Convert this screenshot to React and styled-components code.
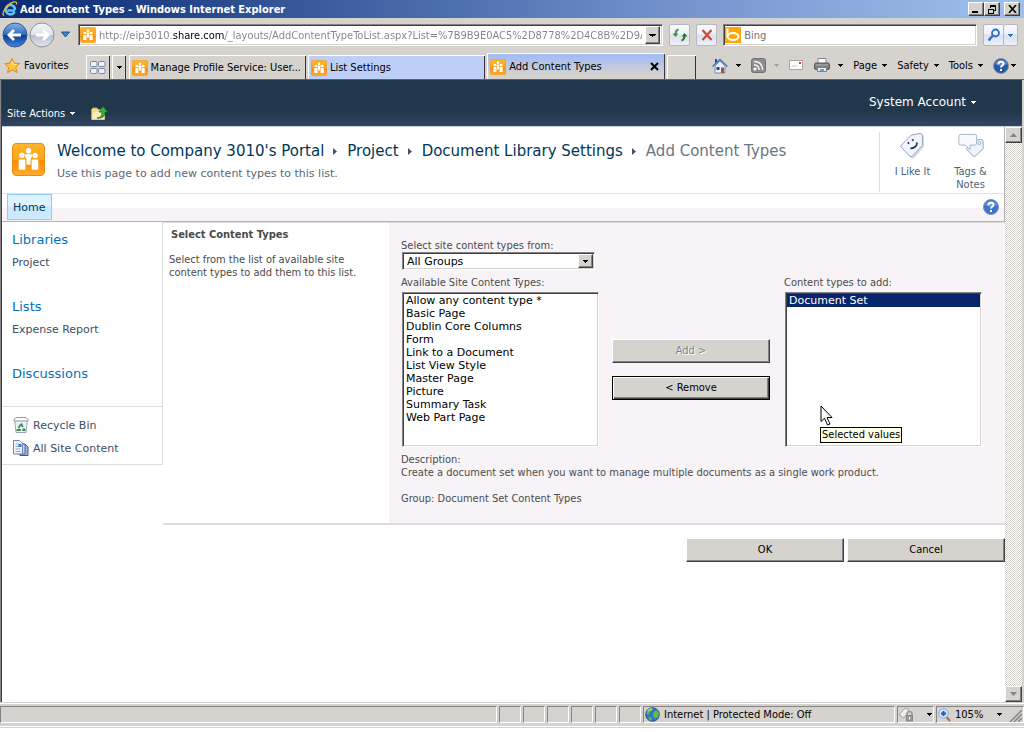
import React from "react";
import styled, { createGlobalStyle, css } from "styled-components";

const ui = `"DejaVu Sans Condensed", "DejaVu Sans", sans-serif`;
const wide = `"DejaVu Sans", sans-serif`;
const face = "#d6d3ce";

const GlobalStyle = createGlobalStyle`
  *, *::before, *::after { box-sizing: border-box; }
  body { margin: 0; background: #fff; font: 11px/13px ${ui}; color: #000; }
  button, input, select { font: inherit; color: inherit; margin: 0; border-radius: 0; }
  a { color: inherit; text-decoration: none; }
  svg { display: block; flex: none; }
  h1, h2, p, ul { margin: 0; padding: 0; font: inherit; list-style: none; }
`;

const raised = css`
  border: 1px solid;
  border-color: #fff #404040 #404040 #fff;
  box-shadow: inset -1px -1px 0 #848284;
`;
const sunken = css`
  border: 1px solid;
  border-color: #848284 #fff #fff #848284;
  box-shadow: inset 1px 1px 0 #404040, inset -1px -1px 0 ${face};
`;

/* ---------- browser window ---------- */

const Window = styled.div`
  display: flex;
  flex-direction: column;
  min-height: 100vh;
  padding: 0 8px 4px 0;
`;

const TitleBar = styled.header`
  display: flex;
  align-items: center;
  gap: 2px;
  height: 18px;
  padding: 0 4px 0 2px;
  background: linear-gradient(90deg, #0a2a72, #4f70b0 45%, #7796d0 68%, #a0c0ec);
`;

const WindowTitle = styled.h1`
  flex: 1;
  color: #fff;
  font-weight: bold;
  white-space: nowrap;
`;

const CaptionButton = styled.button`
  ${raised}
  display: grid;
  place-items: center;
  width: 16px;
  height: 14px;
  padding: 0;
  margin-left: ${(p) => (p.$apart ? "2px" : "-2px")};
  background: ${face};
`;

const NavBar = styled.div`
  display: flex;
  align-items: center;
  gap: 6px;
  height: 34px;
  padding: 0 6px 0 2px;
  background: ${face};
`;

const History = styled.div`
  display: flex;
  align-items: center;
  gap: 1px;
  height: 28px;
`;

const PlainButton = styled.button`
  display: flex;
  align-items: center;
  gap: ${(p) => p.$gap || 0}px;
  padding: 0;
  border: 0;
  background: none;
  white-space: nowrap;
`;

const Field = styled.div`
  ${sunken}
  display: flex;
  align-items: center;
  flex: ${(p) => p.$grow} 1 0;
  gap: 3px;
  min-width: 0;
  height: 22px;
  padding: 2px 2px 2px 1px;
  background: #fff;
`;

const AddressInput = styled.input`
  flex: 1;
  min-width: 0;
  padding: 0;
  border: 0;
  outline: 0;
  color: transparent;
  background: linear-gradient(90deg, #848284 74px, #000 74px, #000 126px, #848284 126px);
  -webkit-background-clip: text;
  background-clip: text;
`;

const SearchInput = styled.input`
  flex: 1;
  min-width: 0;
  padding: 0;
  border: 0;
  outline: 0;
  background: none;
  &::placeholder { color: #737373; opacity: 1; }
`;

const DropButton = styled.button`
  ${raised}
  display: grid;
  place-items: center;
  width: 15px;
  height: 18px;
  padding: 0;
  background: ${face};
`;

const GlassButton = styled.button`
  display: flex;
  align-items: center;
  justify-content: center;
  width: ${(p) => p.$w || 21}px;
  height: 22px;
  padding: 0;
  border: 1px solid #b5b8c4;
  border-radius: 2px;
  background: linear-gradient(#f8f9fd, #f0f2fa 45%, #dde0ec 50%, #eceff8);
`;

const GoGroup = styled.div`
  display: flex;
  & > button + button { border-left: 0; }
`;

const TabBar = styled.div`
  display: flex;
  align-items: flex-end;
  height: 28px;
  padding: 0 8px 0 4px;
  background: ${face};
  border-bottom: 1px solid #636163;
`;

const Favorites = styled(PlainButton)`
  align-self: center;
  margin-right: 17px;
`;

const ToolTab = styled.button`
  display: grid;
  place-items: center;
  width: ${(p) => p.$w}px;
  height: 24px;
  margin-right: ${(p) => p.$after}px;
  padding: 0;
  border: solid #fff;
  border-width: 1px 0 0 1px;
  box-shadow: inset -1px 0 0 #39303a;
  background: ${face};
`;

const Tabs = styled.div`
  display: flex;
  align-items: flex-end;
  flex: 0 1 536px;
  gap: 2px;
  min-width: 0;
  margin-right: 2px;
`;

const Tab = styled.button`
  display: flex;
  align-items: center;
  flex: 1 1 0;
  gap: 3px;
  min-width: 0;
  height: ${(p) => (p.$active ? 26 : 24)}px;
  padding: 0 6px 0 2px;
  border: solid #fff;
  border-width: 1px 0 0 1px;
  box-shadow: inset -1px 0 0 #39303a;
  background: ${(p) =>
    p.$active ? `linear-gradient(#a5bdf2 10%, ${face} 85%)` : p.$grouped ? "#bdcff7" : face};
  white-space: nowrap;
`;

const TabLabel = styled.span`
  flex: 1;
  min-width: 0;
  overflow: hidden;
  text-align: left;
`;

const Commands = styled.div`
  display: flex;
  align-items: center;
  align-self: center;
  gap: 10px;
  margin-left: auto;
`;

const Viewport = styled.main`
  display: flex;
  flex: 1;
  flex-direction: column;
  border-left: 1px solid #848284;
  border-right: 2px solid #d6d3ce;
  box-shadow: inset 1px 0 0 #404040;
  padding-left: 1px;
`;

const ScrollArea = styled.div`
  display: flex;
  flex: 1;
  align-items: stretch;
`;

const Scrollbar = styled.div`
  display: flex;
  flex-direction: column;
  justify-content: space-between;
  flex: none;
  width: 17px;
  background: repeating-conic-gradient(#fff 0 25%, #d6d3ce 0 50%) 0 0 / 2px 2px;
`;

const ScrollButton = styled.button`
  ${raised}
  display: grid;
  place-items: center;
  width: 17px;
  height: 16px;
  padding: 0;
  background: ${face};
`;

const StatusBar = styled.footer`
  display: flex;
  gap: 2px;
  height: 26px;
  padding: 3px 0 4px;
  border-top: 1px solid #d6d3ce;
  border-bottom: 1px solid ${face};
  box-shadow: inset 0 1px 0 #fff, inset 0 -1px 0 #fff;
  background: ${face};
`;

const Pane = styled.div`
  display: flex;
  align-items: center;
  flex: ${(p) => (p.$w ? `0 0 ${p.$w}px` : "1 1 0")};
  gap: 4px;
  padding: 0 1px;
  border: 1px solid;
  border-color: #848284 #fff #fff #848284;
  white-space: nowrap;
`;

const Spring = styled.span`
  flex: 1;
`;

/* ---------- portal page ---------- */

const Ribbon = styled.div`
  display: flex;
  justify-content: space-between;
  height: 47px;
  padding: 15px 46px 5px 5px;
  background: linear-gradient(#21374c 72%, #263b52 76%, #2d3f58 88%, #33445e);
  border-bottom: 1px solid #c6d0de;
  color: #fff;
`;

const RibbonLeft = styled.div`
  display: flex;
  align-items: center;
  align-self: flex-end;
  gap: 16px;
`;

const Account = styled(PlainButton)`
  align-self: flex-start;
  height: 15px;
  font: 12px/15px ${wide};
`;

const Page = styled.div`
  display: flex;
  flex: 1;
  flex-direction: column;
  min-width: 0;
`;

const PageHead = styled.div`
  display: flex;
  height: 67px;
  padding-left: 10px;
  border-bottom: 1px solid #e4e0e6;
  border-right: 1px solid #b5b2b5;
`;

const Logo = styled.div`
  padding: 16px 12px 0 0;
`;

const HeadText = styled.div`
  flex: 1;
  padding-top: 14px;
  font-family: ${wide};
  color: #5a6779;
`;

const Crumbs = styled.nav`
  display: flex;
  align-items: center;
  gap: 9px;
  height: 20px;
  margin-bottom: 6px;
  font-size: 15px;
  line-height: 20px;
  white-space: nowrap;
  color: #6b7682;
  a { color: #003759; }
`;

const Social = styled.div`
  display: flex;
  gap: 1px;
  height: 60px;
  margin-top: 5px;
  padding: 0 5px 0 4px;
  border-left: 1px solid #e0dce4;
`;

const SocialButton = styled(PlainButton)`
  flex-direction: column;
  width: 57px;
  line-height: 13px;
  white-space: normal;
  color: #4f5f78;
  svg { margin-bottom: 4px; }
`;

const TopNav = styled.div`
  display: flex;
  align-items: center;
  justify-content: space-between;
  height: 28px;
  padding: 0 5px 1px;
  background: linear-gradient(#fff 14px, #f7f3f7 14px);
  border-bottom: 1px solid #b5b2b5;
  border-right: 1px solid #b5b2b5;
`;

const HomeTab = styled.a`
  padding: 6px 6px 5px 5px;
  border: 1px solid #91cdf2;
  background: linear-gradient(#d8f0ff, #e2f4ff 40%, #c8e8fc 55%, #ceebff);
  font: 11px/13px ${wide};
  color: #003759;
`;

const Columns = styled.div`
  display: grid;
  grid-template-columns: 161px minmax(0, 1fr);
  align-items: start;
`;

const Sidebar = styled.nav`
  border: solid #dbdddf;
  border-width: 0 1px 1px 0;
  font-family: ${wide};
  color: #3b4f65;
`;

const SideGroups = styled.div`
  display: flex;
  flex-direction: column;
  gap: 28px;
  padding: 9px 10px 24px;
`;

const SideHeading = styled.h2`
  font-size: 13px;
  line-height: 17px;
  color: #0072bc;
`;

const SideItem = styled.a`
  display: block;
  margin-top: 8px;
  line-height: 14px;
`;

const SideTools = styled.div`
  display: flex;
  flex-direction: column;
  gap: 7px;
  padding: 10px 11px 8px;
  border-top: 1px solid #dbdddf;
`;

const SideTool = styled.a`
  display: flex;
  align-items: center;
  gap: 4px;
  height: 16px;
`;

const FormSection = styled.section`
  display: grid;
  grid-template-columns: 226px minmax(0, 1fr);
  border: solid #dedbde;
  border-width: 1px 0 2px;
`;

const Intro = styled.div`
  padding: 5px 30px 0 6px;
  color: #4a4a4a;
`;

const IntroTitle = styled.h2`
  margin-bottom: 12px;
  padding-left: 2px;
  font-weight: bold;
`;

const Panel = styled.div`
  padding: 16px 12px 18px;
  background: #f7f3f7;
  color: #4c4c4c;
`;

const Caption = styled.label`
  display: block;
  white-space: nowrap;
`;

const GroupPicker = styled.div`
  position: relative;
  width: 193px;
  margin: 0 0 6px 1px;
`;

const GroupSelect = styled.select`
  ${sunken}
  display: block;
  appearance: none;
  width: 100%;
  height: 18px;
  padding: 0 20px 0 4px;
  background: #fff;
  font: 11px/13px ${wide};
  color: #000;
`;

const GroupArrow = styled.span`
  ${raised}
  position: absolute;
  top: 2px;
  right: 2px;
  display: grid;
  place-items: center;
  width: 15px;
  height: 14px;
  background: ${face};
  pointer-events: none;
`;

const Picker = styled.div`
  display: grid;
  grid-template-columns: 197px 158px 197px;
  gap: 14px;
  margin-bottom: 6px;
`;

const ListColumn = styled.div`
  position: relative;
`;

const ListBox = styled.select`
  ${sunken}
  display: block;
  appearance: none;
  width: 100%;
  height: 155px;
  margin: 3px 0 0 1px;
  padding: 1px;
  overflow: hidden;
  outline: 0;
  background: #fff;
  font: 11px/13px ${wide};
  color: #000;
  option {
    min-height: 13px;
    height: 13px;
    padding: 0 2px;
    line-height: 13px;
  }
  option:checked {
    background: linear-gradient(#08246b, #08246b);
    color: #fff;
    -webkit-text-fill-color: #fff;
  }
`;

const MoveButtons = styled.div`
  display: flex;
  flex-direction: column;
  gap: 13px;
  padding-top: 63px;
`;

const PushButton = styled.button`
  ${raised}
  height: 24px;
  padding: 0 0 1px;
  background: ${face};
  color: #000;
  &:disabled { color: #848284; text-shadow: 1px 1px 0 #fff; }
  ${(p) =>
    p.$default &&
    css`
      border-color: #000;
      box-shadow: inset 1px 1px 0 #fff, inset -1px -1px 0 #404040, inset -2px -2px 0 #848284;
    `}
`;

const Pointer = styled.svg`
  position: absolute;
  left: 36px;
  top: 129px;
`;

const Tooltip = styled.div`
  position: absolute;
  left: 36px;
  top: 151px;
  padding: 0 1px;
  height: 16px;
  line-height: 14px;
  border: 1px solid #000;
  background: #ffffe7;
  color: #000;
  white-space: nowrap;
`;

const Details = styled.div`
  display: grid;
  row-gap: 13px;
`;

const Actions = styled.div`
  display: flex;
  justify-content: flex-end;
  gap: 3px;
  padding-top: 13px;
  ${PushButton} { width: 158px; }
`;

/* ---------- drawings ---------- */

const Caret = ({ color = "#000", w = 5 }) => (
  <svg width={w} height="3" viewBox="0 0 5 3" shapeRendering="crispEdges" preserveAspectRatio="none">
    <path d="M0 0h5v1H4v1H3v1H2V2H1V1H0z" fill={color} />
  </svg>
);

const People = ({ size = 16 }) => (
  <svg width={size} height={size} viewBox="0 0 32 32">
    <defs>
      <linearGradient id="orange" x1="0" y1="0" x2="0" y2="1">
        <stop offset="0" stopColor="#ffb52a" />
        <stop offset=".5" stopColor="#fba41b" />
        <stop offset=".55" stopColor="#fb8a06" />
        <stop offset="1" stopColor="#ffae2c" />
      </linearGradient>
    </defs>
    <rect x=".5" y=".5" width="31" height="31" rx="4" fill="url(#orange)" stroke="#f08a10" />
    <g fill="#fff">
      <circle cx="16" cy="7.500" r="2.600" />
      <path d="M12 11.500q4-1.500 8 0l-2 4V21h-4v-5.500z" />
      <circle cx="9.500" cy="12" r="2.600" />
      <circle cx="22.500" cy="12" r="2.600" />
      <rect x="6.500" y="16" width="6.500" height="10" rx="1" />
      <rect x="19" y="16" width="6.500" height="10" rx="1" />
    </g>
  </svg>
);

const IeLogo = () => (
  <svg width="16" height="16" viewBox="0 0 16 16">
    <path d="M13 9.500H5.500M12.600 10.800A4.700 4.700 0 1 1 12.800 7v2" fill="none" stroke="#5cc2f7" strokeWidth="2.600" />
    <path d="M1.800 14.800C-1 12 5 3.500 11 1.200c2.500-.9 4-.4 3.500 2.300" fill="none" stroke="#f5b92a" strokeWidth="1.300" />
  </svg>
);

const Orb = ({ forward }) => (
  <svg width="26" height="26" viewBox="0 0 26 26">
    <defs>
      <linearGradient id={forward ? "orbF" : "orbB"} x1="0" y1="0" x2="0" y2="1">
        <stop offset="0" stopColor={forward ? "#f4f6fa" : "#86b4e8"} />
        <stop offset=".48" stopColor={forward ? "#dfe3ea" : "#2d6cc0"} />
        <stop offset=".52" stopColor={forward ? "#b9c0cc" : "#0a3c94"} />
        <stop offset="1" stopColor={forward ? "#e2e6ee" : "#3f8ae0"} />
      </linearGradient>
    </defs>
    <circle cx="13" cy="13" r="12" fill={`url(#${forward ? "orbF" : "orbB"})`} stroke={forward ? "#8c929e" : "#3a568c"} />
    <path
      d="M12 8l-5 5 5 5M7.500 13H19"
      transform={forward ? "rotate(180 13 13)" : undefined}
      fill="none"
      stroke="#fff"
      strokeWidth="2.800"
    />
  </svg>
);

const Refresh = () => (
  <svg width="16" height="16" viewBox="0 0 16 16" fill="none" stroke="#2f9a3a" strokeWidth="2">
    <path d="M6.500 2.500Q3.500 3 3.500 8" />
    <path d="M.5 6.500h6L3.500 10z" fill="#2f9a3a" stroke="none" />
    <path d="M9.500 13.500q3-.5 3-5.500" stroke="#23782b" />
    <path d="M9.500 9.500h6L12.500 6z" fill="#23782b" stroke="none" />
  </svg>
);

const Stop = () => (
  <svg width="14" height="14" viewBox="0 0 14 14">
    <path d="M2.500 2l9 10M11.500 2l-9 10" stroke="#c84a3c" strokeWidth="2.200" />
  </svg>
);

const BingMark = () => (
  <svg width="16" height="16" viewBox="0 0 16 16">
    <rect width="16" height="16" fill="#ffa50c" />
    <path d="M2.500 1.500V9" stroke="#fff" strokeWidth="2" />
    <ellipse cx="8" cy="9.500" rx="5.500" ry="3.500" fill="none" stroke="#fff" strokeWidth="2" />
  </svg>
);

const Magnifier = () => (
  <svg width="14" height="14" viewBox="0 0 14 14" fill="none" stroke="#2a6fd0">
    <circle cx="8.500" cy="5" r="3.500" strokeWidth="1.800" />
    <path d="M6 7.500L1.500 12.500" strokeWidth="2.500" />
  </svg>
);

const Star = () => (
  <svg width="17" height="17" viewBox="0 0 17 17">
    <path d="M8 1.500l2.200 4.600 5.300.4-3.800 3.700 1.400 5.300-4.800-2.700-4.700 2.900 1-5.500L.8 6.800l5-.7z" fill="#ffc53a" stroke="#d88a1c" />
    <path d="M8 4l1.300 3.300 3 .2" fill="none" stroke="#fff0b0" />
  </svg>
);

const QuickTabs = () => (
  <svg width="16" height="14" viewBox="0 0 16 14" fill="#eef0f8" stroke="#7c84a4">
    <rect x=".5" y=".5" width="6.500" height="5" rx="1" />
    <rect x="8.500" y=".5" width="6.500" height="5" rx="1" />
    <rect x=".5" y="7.500" width="6.500" height="5" rx="1" />
    <rect x="8.500" y="7.500" width="6.500" height="5" rx="1" />
  </svg>
);

const HomeIcon = () => (
  <svg width="16" height="16" viewBox="0 0 16 16">
    <path d="M3 1h2v4H3z" fill="#24489c" />
    <path d="M3 8l5-5 5 5v7H3z" fill="#e8eefa" stroke="#7a8cb4" />
    <path d="M.5 8.500L8 1.500l7.500 7" fill="none" stroke="#4a78c4" strokeWidth="1.500" />
    <path d="M9 9.500h3V15H9z" fill="#9c5a3a" />
    <path d="M4.500 9h3v3h-3z" fill="#24489c" />
  </svg>
);

const Feed = () => (
  <svg width="15" height="15" viewBox="0 0 15 15">
    <rect x=".5" y=".5" width="14" height="14" rx="2" fill="#8d8b8d" stroke="#747274" />
    <circle cx="4" cy="11" r="1.500" fill="#fff" />
    <path d="M3 7q5 0 5 5M3 3.500q8.500 0 8.500 8.500" fill="none" stroke="#f4f4f4" strokeWidth="1.500" />
  </svg>
);

const Mail = () => (
  <svg width="15" height="11" viewBox="0 0 15 11">
    <rect x=".5" y=".5" width="13" height="9" fill="#fff" stroke="#a9a6a9" />
    <rect x="10" y="2" width="2" height="2" fill="#d03a30" />
    <path d="M3 6h5" stroke="#c6c3c6" />
  </svg>
);

const Printer = () => (
  <svg width="16" height="15" viewBox="0 0 16 15">
    <path d="M4 5V.5h8V5" fill="#fff" stroke="#8c8a8c" />
    <rect x=".5" y="5" width="15" height="6.500" rx="1.500" fill="#7d7b80" stroke="#5b595d" />
    <path d="M2 7h12" stroke="#bdbabd" />
    <path d="M3.500 9.500h9v4h-9z" fill="#e8f0fa" stroke="#7d8290" />
    <path d="M6 12h4" stroke="#5aa4d8" strokeWidth="2" />
  </svg>
);

const Help = ({ dark }) => (
  <svg width="16" height="16" viewBox="0 0 16 16">
    <circle cx="8" cy="8" r="7.500" fill={dark ? "#2658a4" : "#3f74c8"} stroke={dark ? "#8a929e" : "#6d90cc"} />
    <path d="M2 6a6.500 6.500 0 0 1 12 0q-6 3-12 0z" fill="#7aa4e0" opacity=".7" />
    <path d="M5.500 6.200q0-2.500 2.500-2.500t2.500 2.100q0 1.200-1.300 1.900Q8 8.300 8 9.600" fill="none" stroke="#fff" strokeWidth="1.900" />
    <rect x="7" y="11" width="2" height="2" fill="#fff" />
  </svg>
);

const FolderUp = () => (
  <svg width="17" height="16" viewBox="0 0 17 16">
    <path d="M.5 4.500L2 3h4l1 1.500h6.500v10H.5z" fill="#f2dc92" stroke="#c0a050" />
    <path d="M2.500 7h11v7.500H1z" fill="#fbecb4" />
    <path d="M6 13q5 0 5-6H8l4-5.500L16.500 7H14q0 7-8 6z" fill="#3fae3f" stroke="#1c7a28" strokeWidth=".8" />
  </svg>
);

const LikeIcon = () => (
  <svg width="28" height="29" viewBox="0 0 28 29">
    <path d="M13 3.500l8.500-1.500q2.500-.2 2.500 2.500v9.500L14.500 25q-1.500 1.500-3 0L3 16q-1.200-1.300 0-2.500z" fill="#d9dce6" transform="translate(1 1)" />
    <path d="M12.500 3l8.500-1.500q2.500-.2 2.500 2.500v9.500L13.500 24q-1.500 1.500-3 0L2.500 15.500q-1.200-1.300 0-2.500z" fill="#f1f5fb" stroke="#8fa3c4" />
    <path d="M8.700 11.500l1.500-1M13 8.500l1.500-1M11.500 16.500q6.500-.5 6.500-6" fill="none" stroke="#27364e" strokeWidth="1.800" />
  </svg>
);

const TagsIcon = () => (
  <svg width="28" height="29" viewBox="0 0 30 29">
    <path d="M17 8l8.500-1q2.500 0 2.500 2.500V17l-8 7.500q-1.500 1.200-3 0L10 17z" fill="#eef3fb" stroke="#8fa3c4" />
    <circle cx="24" cy="11" r="1.500" fill="#fff" stroke="#8fa3c4" />
    <path d="M4 1.500h15q2 0 2 2V11q0 2-2 2h-5v5l-5-5H4q-2 0-2-2V3.500q0-2 2-2z" fill="#f6f9fd" stroke="#9fb0cc" />
  </svg>
);

const BinIcon = () => (
  <svg width="16" height="16" viewBox="0 0 16 16">
    <path d="M1.500 2l1.500 13.500h10L14.500 2z" fill="#eef1f7" stroke="#9aa3b8" />
    <path d="M1 2.500l2-2h10l2 2v1.500H1z" fill="#fff" stroke="#8c96b0" />
    <path d="M8 6.500l3.500 6.500h-7z" fill="none" stroke="#3d8a4a" strokeWidth="1.800" strokeDasharray="4 1.500" />
  </svg>
);

const DocsIcon = () => (
  <svg width="16" height="16" viewBox="0 0 16 16">
    <path d="M7 4h5l3 3v8.500H7z" fill="#9db4d8" stroke="#3f5588" />
    <path d="M4 2.500h5l3 3V14H4z" fill="#c9d8ee" stroke="#4f689c" />
    <path d="M.5.5h6l3 3V14h-9z" fill="#f3f7fd" stroke="#6e86b4" />
    <path d="M2.500 4h3M2.500 6.500h5M2.500 9h5M2.500 11.500h5" stroke="#8ca4cc" />
    <rect x="5.500" y="4" width="3" height="3" fill="#3a7cd0" />
  </svg>
);

const Globe = () => (
  <svg width="15" height="15" viewBox="0 0 15 15">
    <circle cx="7.500" cy="7.500" r="6.800" fill="#3570c4" stroke="#274f90" />
    <path d="M3 2.500q3-2 5-.8L7 4 4.500 5 4 8 1.200 6.500zM8.500 5l3.500-2 2 3.500-1 4-3 1L8 8.500zM4 9.500l3 1.500-.5 3L3.500 12z" fill="#5dbb48" />
    <path d="M3 4.500Q4.500 2 7 1.800" stroke="#d8ecff" fill="none" />
  </svg>
);

const LockIcon = () => (
  <svg width="15" height="15" viewBox="0 0 15 15">
    <path d="M0 8L6 1l4 2-5 8z" fill="#eeecee" stroke="#a5a2a5" />
    <path d="M8 9V7q0-2.500 2.500-2.500T13 7v2" fill="none" stroke="#9c9a9c" strokeWidth="1.500" />
    <rect x="7.500" y="8.500" width="6" height="5.500" fill="#9c9a9c" stroke="#848284" />
    <path d="M10.500 10v2.500" stroke="#fff" />
  </svg>
);

const ZoomIcon = () => (
  <svg width="13" height="14" viewBox="0 0 13 14">
    <path d="M8 8.500l4 4.500" stroke="#a8714a" strokeWidth="2" />
    <circle cx="5.500" cy="5.500" r="4.700" fill="#d4e8fc" stroke="#7fa8dc" />
    <path d="M3 5.500h5M5.500 3v5" stroke="#1f56b8" strokeWidth="2" />
  </svg>
);

const CrumbArrow = () => (
  <svg width="5" height="9" viewBox="0 0 5 9">
    <path d="M0 1l4 3.500L0 8z" fill="#44546a" />
  </svg>
);

/* ---------- data ---------- */

const available = [
  "Allow any content type *",
  "Basic Page",
  "Dublin Core Columns",
  "Form",
  "Link to a Document",
  "List View Style",
  "Master Page",
  "Picture",
  "Summary Task",
  "Web Part Page",
];

const sideGroups = [
  { title: "Libraries", items: ["Project"] },
  { title: "Lists", items: ["Expense Report"] },
  { title: "Discussions", items: [] },
];

const commands = [
  { name: "Home page", icon: <HomeIcon />, gap: 8, caret: "#000" },
  { name: "Feeds", icon: <Feed />, gap: 8, caret: "#a5a2a5" },
  { name: "Read mail", icon: <Mail /> },
  { name: "Print", icon: <Printer />, gap: 8, caret: "#000" },
  { text: "Page", gap: 5, caret: "#000" },
  { text: "Safety", gap: 5, caret: "#000" },
  { text: "Tools", gap: 5, caret: "#000" },
  { name: "Help", icon: <Help dark />, gap: 2, caret: "#000" },
];

export default function App() {
  return (
    <>
      <GlobalStyle />
      <Window>
        <TitleBar>
          <IeLogo />
          <WindowTitle>Add Content Types - Windows Internet Explorer</WindowTitle>
          <CaptionButton aria-label="Minimize">
            <svg width="8" height="8"><path d="M0 7h6" stroke="#000" strokeWidth="2" /></svg>
          </CaptionButton>
          <CaptionButton aria-label="Restore">
            <svg width="10" height="9" fill="none" stroke="#000" shapeRendering="crispEdges">
              <path d="M3.500 3V.5h5v5H7M3 1.500h6M1.500 4.500h5v4h-5zM1 4.500h6" />
            </svg>
          </CaptionButton>
          <CaptionButton $apart aria-label="Close">
            <svg width="9" height="8"><path d="M1 0l7 8M8 0L1 8" stroke="#000" strokeWidth="1.600" /></svg>
          </CaptionButton>
        </TitleBar>

        <NavBar>
          <History>
            <PlainButton aria-label="Back"><Orb /></PlainButton>
            <PlainButton aria-label="Forward"><Orb forward /></PlainButton>
            <PlainButton aria-label="Recent pages">
              <svg width="16" height="8" viewBox="0 0 16 8">
                <path d="M5.500 1h8l-4 5z" fill="#3a8ad0" stroke="#1f4f94" />
              </svg>
            </PlainButton>
          </History>
          <Field $grow={7}>
            <People />
            <AddressInput
              aria-label="Address"
              defaultValue="http://eip3010.share.com/_layouts/AddContentTypeToList.aspx?List=%7B9B9E0AC5%2D8778%2D4C8B%2D9A"
            />
            <DropButton aria-label="Show addresses"><Caret w={7} /></DropButton>
          </Field>
          <GlassButton aria-label="Refresh"><Refresh /></GlassButton>
          <GlassButton aria-label="Stop"><Stop /></GlassButton>
          <Field $grow={3}>
            <BingMark />
            <SearchInput aria-label="Search" placeholder="Bing" />
          </Field>
          <GoGroup>
            <GlassButton aria-label="Search"><Magnifier /></GlassButton>
            <GlassButton $w={14} aria-label="Search options"><Caret color="#2a6fd0" /></GlassButton>
          </GoGroup>
        </NavBar>

        <TabBar>
          <Favorites $gap={3}><Star />Favorites</Favorites>
          <ToolTab $w={24} $after={2} aria-label="Quick tabs"><QuickTabs /></ToolTab>
          <ToolTab $w={14} $after={3} aria-label="Tab list"><Caret /></ToolTab>
          <Tabs>
            <Tab><People /><TabLabel>Manage Profile Service: User...</TabLabel></Tab>
            <Tab $grouped><People /><TabLabel>List Settings</TabLabel></Tab>
            <Tab $active>
              <People />
              <TabLabel>Add Content Types</TabLabel>
              <svg width="9" height="9"><path d="M1 1l7 7M8 1L1 8" stroke="#000" strokeWidth="2" /></svg>
            </Tab>
          </Tabs>
          <ToolTab $w={29} $after={0} aria-label="New tab" />
          <Commands>
            {commands.map((c) => (
              <PlainButton key={c.name || c.text} $gap={c.gap} aria-label={c.name}>
                {c.icon}
                {c.text}
                {c.caret && <Caret color={c.caret} />}
              </PlainButton>
            ))}
          </Commands>
        </TabBar>

        <Viewport>
          <Ribbon>
            <RibbonLeft>
              <PlainButton $gap={5}>Site Actions <Caret color="#fff" /></PlainButton>
              <PlainButton aria-label="Navigate up"><FolderUp /></PlainButton>
            </RibbonLeft>
            <Account $gap={5}>System Account <Caret color="#fff" /></Account>
          </Ribbon>

          <ScrollArea>
            <Page>
              <PageHead>
                <Logo><People size={33} /></Logo>
                <HeadText>
                  <Crumbs aria-label="Breadcrumb">
                    <a href="#portal">Welcome to Company 3010's Portal</a>
                    <CrumbArrow />
                    <a href="#project">Project</a>
                    <CrumbArrow />
                    <a href="#settings">Document Library Settings</a>
                    <CrumbArrow />
                    <span>Add Content Types</span>
                  </Crumbs>
                  <p>Use this page to add new content types to this list.</p>
                </HeadText>
                <Social>
                  <SocialButton><LikeIcon />I Like It</SocialButton>
                  <SocialButton><TagsIcon />Tags &amp; Notes</SocialButton>
                </Social>
              </PageHead>

              <TopNav>
                <HomeTab href="#home">Home</HomeTab>
                <PlainButton aria-label="Page help"><Help /></PlainButton>
              </TopNav>

              <Columns>
                <Sidebar>
                  <SideGroups>
                    {sideGroups.map((g) => (
                      <div key={g.title}>
                        <SideHeading><a href="#list">{g.title}</a></SideHeading>
                        {g.items.map((i) => <SideItem key={i} href="#item">{i}</SideItem>)}
                      </div>
                    ))}
                  </SideGroups>
                  <SideTools>
                    <SideTool href="#recycle"><BinIcon />Recycle Bin</SideTool>
                    <SideTool href="#all"><DocsIcon />All Site Content</SideTool>
                  </SideTools>
                </Sidebar>

                <div>
                  <FormSection>
                    <Intro>
                      <IntroTitle>Select Content Types</IntroTitle>
                      <p>Select from the list of available site content types to add them to this list.</p>
                    </Intro>
                    <Panel>
                      <Caption htmlFor="group">Select site content types from:</Caption>
                      <GroupPicker>
                        <GroupSelect id="group" defaultValue="All Groups">
                          <option>All Groups</option>
                        </GroupSelect>
                        <GroupArrow><Caret /></GroupArrow>
                      </GroupPicker>
                      <Picker>
                        <ListColumn>
                          <Caption htmlFor="available">Available Site Content Types:</Caption>
                          <ListBox id="available" multiple>
                            {available.map((t) => <option key={t}>{t}</option>)}
                          </ListBox>
                        </ListColumn>
                        <MoveButtons>
                          <PushButton disabled>Add &gt;</PushButton>
                          <PushButton $default>&lt; Remove</PushButton>
                        </MoveButtons>
                        <ListColumn>
                          <Caption htmlFor="chosen">Content types to add:</Caption>
                          <ListBox id="chosen" multiple defaultValue={["Document Set"]}>
                            <option>Document Set</option>
                          </ListBox>
                          <Pointer width="13" height="21" viewBox="0 0 13 21">
                            <path d="M1 1v15.500l3.500-3.300 3 6.800 2.500-1-3-6.500h5z" fill="#fff" stroke="#000" />
                          </Pointer>
                          <Tooltip role="tooltip">Selected values</Tooltip>
                        </ListColumn>
                      </Picker>
                      <Details>
                        <p>
                          Description:
                          <br />
                          Create a document set when you want to manage multiple documents as a single work product.
                        </p>
                        <p>Group: Document Set Content Types</p>
                      </Details>
                    </Panel>
                  </FormSection>
                  <Actions>
                    <PushButton>OK</PushButton>
                    <PushButton>Cancel</PushButton>
                  </Actions>
                </div>
              </Columns>
            </Page>
            <Scrollbar>
              <ScrollButton aria-label="Scroll up">
                <svg width="7" height="4"><path d="M3.500 0L7 4H0z" fill="#848284" /></svg>
              </ScrollButton>
              <ScrollButton aria-label="Scroll down">
                <svg width="7" height="4"><path d="M3.500 4L7 0H0z" fill="#848284" /></svg>
              </ScrollButton>
            </Scrollbar>
          </ScrollArea>
        </Viewport>

        <StatusBar>
          <Pane />
          {[0, 1, 2, 3, 4, 5].map((n) => <Pane key={n} $w={22} />)}
          <Pane $w={252}><Globe />Internet | Protected Mode: Off</Pane>
          <Pane $w={37}><LockIcon /><Spring /><Caret /></Pane>
          <Pane $w={88}>
            <ZoomIcon />105%<Spring /><Caret />
            <svg width="16" height="14" stroke="#848284">
              <path d="M4 14L16 2M8 14l8-8M12 14l4-4" strokeWidth="1.500" />
            </svg>
          </Pane>
        </StatusBar>
      </Window>
    </>
  );
}
